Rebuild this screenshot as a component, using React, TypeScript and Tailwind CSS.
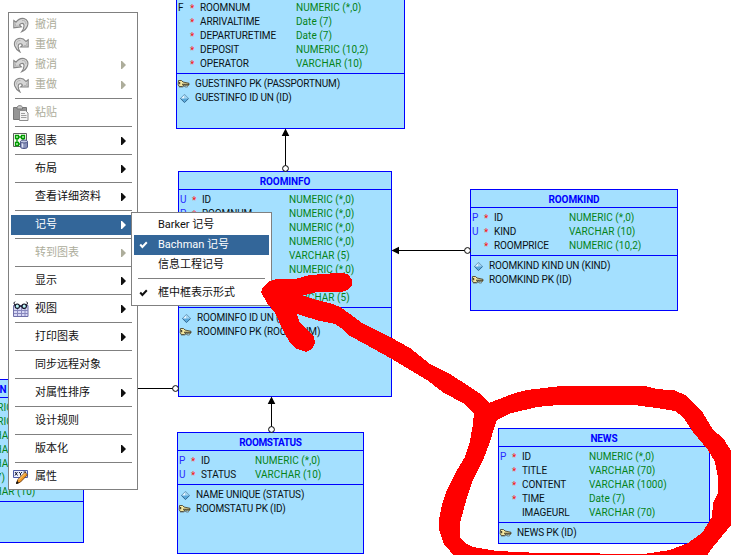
import React from 'react';

type Column = [flag: string, required: boolean, name: string, type: string];
type Constraint = ['key' | 'unique', string];

interface Table {
  title: string;
  titleClass?: string;
  box: string;
  typeCol: string;
  columns: Column[];
  constraints: Constraint[];
}

const tables: Table[] = [
  {
    title: '',
    box: 'left-[176px] top-[-21px] w-[229px] h-[150px]',
    typeCol: 'w-[96px]',
    columns: [
      ['F', true, 'ROOMNUM', 'NUMERIC (*,0)'],
      ['', true, 'ARRIVALTIME', 'Date (7)'],
      ['', true, 'DEPARTURETIME', 'Date (7)'],
      ['', true, 'DEPOSIT', 'NUMERIC (10,2)'],
      ['', true, 'OPERATOR', 'VARCHAR (10)'],
    ],
    constraints: [
      ['key', 'GUESTINFO PK (PASSPORTNUM)'],
      ['unique', 'GUESTINFO ID UN (ID)'],
    ],
  },
  {
    title: 'ROOMINFO',
    box: 'left-[178px] top-[171px] w-[214px] h-[226px]',
    typeCol: 'w-[87px]',
    columns: [
      ['U', true, 'ID', 'NUMERIC (*,0)'],
      ['P', true, 'ROOMNUM', 'NUMERIC (*,0)'],
      ['', false, '', 'NUMERIC (*,0)'],
      ['', false, '', 'NUMERIC (*,0)'],
      ['', false, '', 'VARCHAR (5)'],
      ['', false, '', 'NUMERIC (*,0)'],
      ['', false, '', ''],
      ['', false, '', 'VARCHAR (5)'],
    ],
    constraints: [
      ['unique', 'ROOMINFO ID UN (ID)'],
      ['key', 'ROOMINFO PK (ROOMNUM)'],
    ],
  },
  {
    title: 'ROOMKIND',
    box: 'left-[470px] top-[189px] w-[208px] h-[122px]',
    typeCol: 'w-[75px]',
    columns: [
      ['P', true, 'ID', 'NUMERIC (*,0)'],
      ['U', true, 'KIND', 'VARCHAR (10)'],
      ['', true, 'ROOMPRICE', 'NUMERIC (10,2)'],
    ],
    constraints: [
      ['unique', 'ROOMKIND KIND UN (KIND)'],
      ['key', 'ROOMKIND PK (ID)'],
    ],
  },
  {
    title: 'ROOMSTATUS',
    titleClass: 'tracking-[-0.35px]',
    box: 'left-[177px] top-[432px] w-[187px] h-[122px]',
    typeCol: 'w-[54px]',
    columns: [
      ['P', true, 'ID', 'NUMERIC (*,0)'],
      ['U', true, 'STATUS', 'VARCHAR (10)'],
    ],
    constraints: [
      ['unique', 'NAME UNIQUE (STATUS)'],
      ['key', 'ROOMSTATU PK (ID)'],
    ],
  },
  {
    title: 'NEWS',
    box: 'left-[498px] top-[428px] w-[212px] h-[116px]',
    typeCol: 'w-[67px]',
    columns: [
      ['P', true, 'ID', 'NUMERIC (*,0)'],
      ['', true, 'TITLE', 'VARCHAR (70)'],
      ['', true, 'CONTENT', 'VARCHAR (1000)'],
      ['', true, 'TIME', 'Date (7)'],
      ['', false, 'IMAGEURL', 'VARCHAR (70)'],
    ],
    constraints: [['key', 'NEWS PK (ID)']],
  },
  {
    title: 'N',
    titleClass: 'pl-[62px]',
    box: 'left-[-140px] top-[379px] w-[224px] h-[164px]',
    typeCol: 'w-[85px]',
    columns: [
      ['', false, '', 'NUMERIC (*,0)'],
      ['', false, '', 'NUMERIC (*,0)'],
      ['', false, '', 'VARCHAR (10)'],
      ['', false, '', 'VARCHAR (10)'],
      ['', false, '', 'VARCHAR (10)'],
      ['', false, '', 'Date (7)'],
      ['', false, '', 'VARCHAR (10)'],
    ],
    constraints: [],
  },
];

const KeyIcon = () => (
  <svg width="13" height="10" viewBox="0 0 13 10">
    <path d="M1.5 1.5h3l1.5 1.5 6 1.3v1.6l-1.6 1-1-1-1 1-1.2-1-2 1.600h-3l-1-2z" fill="#f4e7a0" stroke="#4a432c" strokeWidth="0.9" />
    <path d="M5 5.200h7M2.600 3l.1 2.200" stroke="#3a3628" strokeWidth="1.1" />
    <path d="M2 8h4l1-.8 2 1 2-.6" stroke="#5a5a50" strokeWidth="0.7" fill="none" />
  </svg>
);

const UniqueIcon = () => (
  <svg width="9" height="9" viewBox="0 0 9 9">
    <path d="M4.500.3 8.600 4.500 4.500 8.600.4 4.500z" fill="#5aa9da" />
    <path d="M4.500.8 4.500 4.500 1 4.500z" fill="#eaf7ff" />
    <path d="M4.500.8 8 4.500 4.500 4.500z" fill="#a5d6f2" />
    <path d="M.4 4.500 4.500.3 8.600 4.500" fill="none" stroke="#6d96b0" strokeWidth="0.7" />
    <path d="M.4 4.500 4.500 8.600 8.600 4.500" fill="none" stroke="#2a5f88" strokeWidth="0.9" />
  </svg>
);

function TableNode({ title, titleClass = 'tracking-[-0.1px]', box, typeCol, columns, constraints }: Table) {
  return (
    <section
      className={`absolute flex flex-col border border-[#0000ff] bg-[#a4e0ff] text-[10px] leading-[14px] whitespace-nowrap text-[#0a1216] ${box}`}
    >
      <h2 className={`h-[18px] shrink-0 border-b border-[#0000ff] pt-[3px] text-center font-bold text-[#0000ff] ${titleClass}`}>{title}</h2>
      <div className="border-b border-[#0000ff] pt-[3px] pb-[2px]">
        {columns.map(([flag, required, name, type], i) => (
          <div key={i} className="flex h-[14px] pl-px">
            <span className={`w-[12px] ${flag === 'F' ? '' : 'text-[#2a2aff]'}`}>{flag}</span>
            <span className="w-[10px] pt-px text-[10px] text-[#ff1010]">{required ? '*' : ''}</span>
            <span className={`shrink-0 tracking-[-0.13px] ${typeCol}`}>{name}</span>
            <span className="tracking-[0.05px] text-[#058318]">{type}</span>
          </div>
        ))}
      </div>
      <div className="pt-[3px]">
        {constraints.map(([kind, text]) => (
          <div key={text} className="flex h-[14px]">
            <span className="flex w-[18px] items-center justify-start">
              {kind === 'key' ? <KeyIcon /> : <span className="pl-[3px]"><UniqueIcon /></span>}
            </span>
            <span className="tracking-[-0.15px]">{text}</span>
          </div>
        ))}
      </div>
    </section>
  );
}

const Connectors = () => (
  <svg className="absolute left-0 top-0" width="731" height="555" viewBox="0 0 731 555">
    <g stroke="#000" fill="#fff">
      <path d="M285.5 132V166M271.5 400V427M396 250.5H465M138 388.5H173" />
      <circle cx="285.5" cy="168.5" r="2.9" />
      <circle cx="271.5" cy="429.5" r="2.9" />
      <circle cx="467.5" cy="250.5" r="2.9" />
      <circle cx="175.5" cy="388.5" r="2.9" />
    </g>
    <path d="M285.5 128.500 289.300 136H281.700zM271.500 396.500 275.300 404H267.700zM391.500 250.500 399 246.700V254.300z" />
  </svg>
);

const UndoIcon = () => (
  <svg width="16" height="16" viewBox="0 0 16 16">
    <path d="M.8 3.500 3 5.200C5 2.500 8 .9 11 1.500 14.700 2.400 15.600 6 14.400 9 13.500 11.500 11.500 13.700 8.600 14.800 10.600 12 11.400 9.500 10.800 7.500 10 5.800 7.600 6.200 6.400 8L8.400 9.800.8 10.800z" fill="#d6d6d6" stroke="#858585" strokeWidth="1.100" />
    <path d="M2.500 6.500v2.700l3-.3M9 3.500c2.500-.5 4 1 3.800 3.500" fill="none" stroke="#b4b4b4" />
  </svg>
);

const RedoIcon = () => (
  <svg width="16" height="16" viewBox="0 0 16 16">
    <path d="M15.200 2.800 13 4.500C11 2 8 .8 5.300 1.600 2 2.700.7 5.800 1.800 9 2.800 11.700 4.500 13.800 7 15 5.200 11.700 4.700 9 5.800 7.400 6.700 6.200 8.700 6.700 9.500 8.200L7.600 10 15.200 10z" fill="#d6d6d6" stroke="#858585" strokeWidth="1.100" />
    <path d="M13.500 6.300v2.200h-2.700M7.500 3.600C5 3.200 3.300 4.700 3.600 7.500" fill="none" stroke="#b4b4b4" />
  </svg>
);

const PasteIcon = () => (
  <svg width="16" height="16" viewBox="0 0 16 16">
    <path d="M.5 2.500h13v12H.5z" fill="#969696" stroke="#777" />
    <path d="M4 2.500C4.500 0 9 0 9.500 2.500V4H4z" fill="#c8c8c8" stroke="#777" />
    <path d="M6.500 5.500h6l2.500 2.500v7.500H6.500z" fill="#f4f4f4" stroke="#8c8c8c" />
    <path d="M8 8.500h4M8 10.500h5.500M8 12.500h5.500" stroke="#a0a0a0" />
  </svg>
);

const DiagramIcon = () => (
  <svg width="16" height="16" viewBox="0 0 16 16">
    <path d="M.5.5h13v13H.5z" fill="#f8fff4" stroke="#5f5f5f" />
    <path d="M2.500 2.500h3v3h-3zM8.500 2.500h3v3h-3zM2.500 9.500h3v3h-3zM5.500 4h3M4 5.500v4M10 5.500v2M5.500 11h3" fill="#d8ffd0" stroke="#009a00" strokeWidth="1.300" />
    <path d="M7.500 8.500v5.500c0 2 7 2 7 0V8.500" fill="#8790b8" stroke="#4d5688" />
    <path d="M9.500 10v4.500" stroke="#dfe3f5" strokeWidth="1.500" />
    <ellipse cx="11" cy="8.500" rx="3.500" ry="1.500" fill="#c2c8e4" stroke="#4d5688" />
  </svg>
);

const ViewIcon = () => (
  <svg width="16" height="16" viewBox="0 0 16 16">
    <path d="M.5 4.500h14.500v11H.5z" fill="#d7d7f5" stroke="#6f6fa8" />
    <path d="M4.500 5v10M8.500 5v10M12 5v10M1 9.500h14M1 12.500h14" stroke="#8888bd" />
    <path d="M6.500 5.200h2.500" stroke="#101020" strokeWidth="1.200" />
    <circle cx="4.300" cy="5.200" r="2.200" fill="#b9f3f5" stroke="#101020" strokeWidth="1.200" />
    <circle cx="11.200" cy="5.200" r="2.200" fill="#b9f3f5" stroke="#101020" strokeWidth="1.200" />
    <path d="M2.200 4.500 .8 2 2 .6M13.300 4.500 14.600 2 13.400.6" fill="none" stroke="#101020" />
  </svg>
);

const PropertiesIcon = () => (
  <svg width="16" height="16" viewBox="0 0 16 16">
    <path d="M.5 1.500h14v7H.5z" fill="#eef1ff" stroke="#4e5ca6" />
    <path d="m2 3 2.500 3.500M4.500 3 2 6.500M6 3l1.500 1.700L9 3M7.500 4.500v2M10.500 3H13l-2.500 3.500H13" stroke="#101430" fill="none" />
    <path d="m3.500 14.500 1.300-4L12 3.500l2.500 2.300-7.200 7.400z" fill="#f39a25" stroke="#6c3a12" strokeWidth="0.900" />
    <path d="m5.500 11 7-7" stroke="#ffd98a" />
    <path d="m3.500 14.500.6-1.900 1.300 1.200z" fill="#111" stroke="#111" />
  </svg>
);

const Check = () => (
  <svg width="9" height="8" viewBox="0 0 9 8">
    <path d="M1.200 3.500 3.400 6 7.800 1.300" fill="none" stroke="currentColor" strokeWidth="2" />
  </svg>
);

interface Item {
  label: string;
  icon?: React.ReactNode;
  more?: boolean;
  off?: boolean;
  active?: boolean;
}

const groups: Item[][] = [
  [
    { label: '撤消', icon: <UndoIcon />, off: true },
    { label: '重做', icon: <RedoIcon />, off: true },
    { label: '撤消', icon: <UndoIcon />, off: true, more: true },
    { label: '重做', icon: <RedoIcon />, off: true, more: true },
  ],
  [{ label: '粘贴', icon: <PasteIcon />, off: true }],
  [{ label: '图表', icon: <DiagramIcon />, more: true }],
  [{ label: '布局', more: true }],
  [{ label: '查看详细资料', more: true }],
  [{ label: '记号', more: true, active: true }],
  [{ label: '转到图表', more: true, off: true }],
  [{ label: '显示', more: true }],
  [{ label: '视图', icon: <ViewIcon />, more: true }],
  [{ label: '打印图表', more: true }],
  [{ label: '同步远程对象' }],
  [{ label: '对属性排序', more: true }],
  [{ label: '设计规则' }],
  [{ label: '版本化', more: true }],
  [{ label: '属性', icon: <PropertiesIcon /> }],
];

const cjk = "font-['Roboto','Noto_Sans_CJK_SC',sans-serif]";

function ContextMenu() {
  return (
    <nav className={`absolute left-[8px] top-[12px] h-[478px] w-[130px] border border-[#808080] bg-white px-[2px] py-[2px] text-[11px] leading-[20px] ${cjk}`}>
      {groups.map((items, g) => (
        <div key={g}>
          {g > 0 && <div className="mr-[3px] mb-[4px] ml-[4px] h-[4px] border-b border-[#808080]" />}
          {items.map((item, i) => (
            <div
              key={i}
              className={`flex h-[20px] items-center pl-[2px] ${item.active ? 'bg-[#336699] text-white' : item.off ? 'text-[#adad9b]' : 'text-[#101010]'}`}
            >
              <span className="flex w-[22px] shrink-0 items-center">{item.icon}</span>
              <span className="grow whitespace-nowrap">{item.label}</span>
              {item.more && (
                <svg className="mr-[9px]" width="5" height="8" viewBox="0 0 5 8">
                  <path d="M0 0h1l4 4-4 4H0z" fill="currentColor" />
                </svg>
              )}
            </div>
          ))}
        </div>
      ))}
    </nav>
  );
}

function SubItem({ label, checked, active }: { label: string; checked?: boolean; active?: boolean }) {
  return (
    <div className={`flex h-[20px] items-center pl-[5px] ${active ? 'bg-[#336699] text-white' : 'text-[#101010]'}`}>
      <span className="flex w-[19px] items-center">{checked && <Check />}</span>
      <span className="whitespace-nowrap">{label}</span>
    </div>
  );
}

function NotationMenu() {
  return (
    <nav className={`absolute left-[131px] top-[212px] h-[94px] w-[141px] border border-[#808080] bg-white p-[2px] text-[11px] leading-[20px] ${cjk}`}>
      <SubItem label="Barker 记号" />
      <SubItem label="Bachman 记号" checked active />
      <SubItem label="信息工程记号" />
      <div className="mx-[4px] mb-[4px] h-[4px] border-b border-[#808080]" />
      <SubItem label="框中框表示形式" checked />
    </nav>
  );
}

/* Freehand marker: an arrow from the NEWS table to the checked menu item, and a ring round the table. */
const Marker = () => (
  <svg className="absolute left-0 top-0" width="731" height="555" viewBox="0 0 731 555" shapeRendering="crispEdges">
    <path
      fill="#ff0000"
      fillRule="evenodd"
      d="M261 292 263 287 268 282 275 279.500 295 279 310 275 330 273.500 343 273 349 275 352 280 352 285 348 290 341 292 315 292.500 303 295.500
      317 300 333 304 340 307 350 314 362 323 392 338 410 348 430 364 450 374 470 387 482 395 489 403
      502 398 515 393 527 390 557 386.500 590 385.500 643 385.500 657 389 675 390.500 687 396 703 413 713 430 723 438 735 457V520L727 530 713 547 705 558H456L444 544 439 530 439 520 442 505 447 490 457 470 465 457 470 441 473 424 474 413 463 403 444 393 427 380 410 370 392 359 365 344 350 336 341 328 335 324 320 321 297 314
      300 323 308 330 314 337 315 343 312 349 306 352 297 349 290 343 283 330 275 313 267 303z
      M497 420 510 413.500 537 407 563 404.500 617 405.500 630 404.500 660 408.500 675 411 683 417 693 432 708 450 715 462 718 477 718 493 713 503 712 517 702 533 688 543 670 550 647 553.500H600L593 553H540L497 551 473 547 465 543 460 537 460 523 467 497 473 480 483 460 490 442 495 425z"
    />
  </svg>
);

export default function App() {
  return (
    <main className="relative h-[555px] w-[731px] overflow-hidden bg-white font-['Roboto','Liberation_Sans',sans-serif]">
      {tables.map((t) => (
        <TableNode key={t.box} {...t} />
      ))}
      <Connectors />
      <ContextMenu />
      <NotationMenu />
      <Marker />
    </main>
  );
}
